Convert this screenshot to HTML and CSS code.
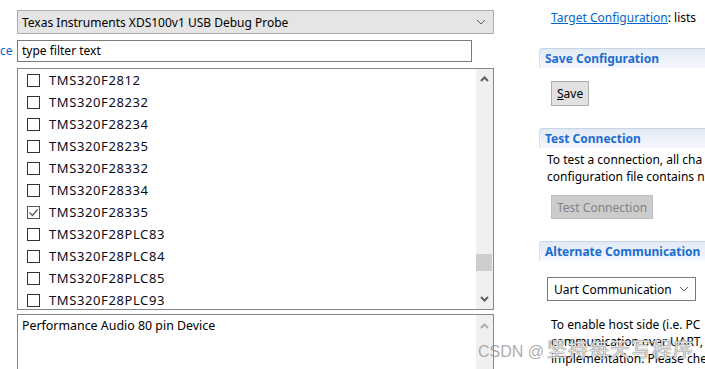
FILE: index.html
```html
<!DOCTYPE html>
<html lang="en">
<head>
    <meta charset="UTF-8">
    <title>Target Configuration</title>
    <link rel="stylesheet" href="styles.css">
</head>
<body>
    <div class="page">
        <div class="left">
            <div class="dropdown">
                <span>Texas Instruments XDS100v1 USB Debug Probe</span>
                <svg class="chev" width="10" height="6" viewBox="0 0 10 6"><path d="M1 1 L5 5 L9 1" fill="none" stroke="#606060" stroke-width="1"/></svg>
            </div>

            <div class="filter-row">
                <span class="cut-link">ce</span>
                <div class="filter">type filter text</div>
            </div>

            <div class="listbox">
                <ul class="items">
                    <li><span class="box"></span>TMS320F2812</li>
                    <li><span class="box"></span>TMS320F28232</li>
                    <li><span class="box"></span>TMS320F28234</li>
                    <li><span class="box"></span>TMS320F28235</li>
                    <li><span class="box"></span>TMS320F28332</li>
                    <li><span class="box"></span>TMS320F28334</li>
                    <li><span class="box checked"><svg width="11" height="11" viewBox="0 0 11 11"><path d="M1.5 5.5 L4.5 8.5 L9.5 2.5" fill="none" stroke="#555" stroke-width="1.2"/></svg></span>TMS320F28335</li>
                    <li><span class="box"></span>TMS320F28PLC83</li>
                    <li><span class="box"></span>TMS320F28PLC84</li>
                    <li><span class="box"></span>TMS320F28PLC85</li>
                    <li><span class="box"></span>TMS320F28PLC93</li>
                </ul>
                <div class="vscroll">
                    <svg class="arrow" width="9" height="6" viewBox="0 0 9 6"><path d="M1 5 L4.5 1.5 L8 5" fill="none" stroke="#606060" stroke-width="2"/></svg>
                    <div class="track"><div class="thumb"></div></div>
                    <svg class="arrow" width="9" height="6" viewBox="0 0 9 6"><path d="M1 1 L4.5 4.5 L8 1" fill="none" stroke="#606060" stroke-width="2"/></svg>
                </div>
            </div>

            <div class="descbox">
                <div class="desc-text">Performance Audio 80 pin Device</div>
                <div class="vscroll light">
                    <svg class="arrow" width="9" height="6" viewBox="0 0 9 6"><path d="M1 5 L4.5 1.5 L8 5" fill="none" stroke="#b0b0b0" stroke-width="2"/></svg>
                </div>
            </div>
        </div>

        <div class="right">
            <p class="intro"><a href="#">Target Configuration</a>: lists</p>

            <div class="section">
                <h2>Save Configuration</h2>
                <div class="section-body first">
                    <button class="btn"><u>S</u>ave</button>
                </div>
            </div>

            <div class="section">
                <h2>Test Connection</h2>
                <div class="section-body">
                    <p class="text">To test a connection, all cha<br>configuration file contains n</p>
                    <button class="btn disabled">Test Connection</button>
                </div>
            </div>

            <div class="section">
                <h2>Alternate Communication</h2>
                <div class="section-body">
                    <div class="combo">
                        <span>Uart Communication</span>
                        <svg width="10" height="6" viewBox="0 0 10 6"><path d="M1 1 L5 5 L9 1" fill="none" stroke="#606060" stroke-width="1"/></svg>
                    </div>
                    <p class="text indent">To enable host side (i.e. PC<br>communication over UART,<br>implementation. Please che</p>
                </div>
            </div>
        </div>
    </div>

    <div class="watermark">CSDN @<span class="cn">坚持每天写程序</span></div>
</body>
</html>
```

FILE: styles.css
```css
html, body {
    margin: 0;
    padding: 0;
    background: #fff;
    height: 369px;
    overflow: hidden;
}

body {
    font-family: 'Noto Sans', 'Open Sans', sans-serif;
    font-size: 12px;
    color: #000;
    position: relative;
}

.page {
    display: flex;
    align-items: flex-start;
}

/* left panel */
.left {
    width: 494px;
    padding-top: 10px;
    display: flex;
    flex-direction: column;
    flex-shrink: 0;
}

.dropdown {
    margin-left: 17px;
    height: 22px;
    border: 1px solid #adadad;
    background: #e5e5e5;
    display: flex;
    align-items: center;
    justify-content: space-between;
    padding: 0 7px 0 4px;
}

.filter-row {
    display: flex;
    margin-top: 6px;
}

.cut-link {
    width: 17px;
    box-sizing: border-box;
    padding-right: 5px;
    text-align: right;
    color: #0066cc;
    line-height: 22px;
    overflow: hidden;
}

.filter {
    height: 20px;
    line-height: 20px;
    border: 1px solid #7a7a7a;
    padding: 0 0 0 4px;
    width: 449px;
}

.listbox {
    margin: 6px 0 0 17px;
    height: 240px;
    border: 1px solid #828790;
    display: flex;
    overflow: hidden;
}

.items {
    list-style: none;
    margin: 0;
    padding: 0;
    flex: 1;
}

.items li {
    height: 22px;
    display: flex;
    align-items: center;
    padding-left: 9px;
    color: #0a0a1a;
    font-size: 13px;
    letter-spacing: 0.6px;
}

.box {
    width: 11px;
    height: 11px;
    border: 1px solid #333;
    margin-right: 9px;
    display: flex;
    align-items: center;
    justify-content: center;
    background: #fff;
}

.box.checked {
    border-color: #555;
}

.vscroll {
    width: 17px;
    background: #f0f0f0;
    display: flex;
    flex-direction: column;
    align-items: center;
}

.vscroll .arrow {
    margin: 7px 0;
}

.track {
    flex: 1;
    width: 100%;
    position: relative;
}

.thumb {
    position: absolute;
    left: 0;
    right: 1px;
    top: 165px;
    height: 17px;
    background: #cdcdcd;
}

.descbox {
    margin: 4px 0 0 17px;
    height: 60px;
    border: 1px solid #828790;
    border-bottom: none;
    display: flex;
}

.desc-text {
    flex: 1;
    padding: 3px 4px;
    line-height: 16px;
    font-size: 12.4px;
}

.vscroll.light .arrow {
    margin-top: 8px;
}

/* right panel */
.right {
    margin-left: 45px;
    width: 260px;
    flex-shrink: 0;
}

.intro {
    margin: 10px 0 0 12px;
    line-height: 16px;
    white-space: nowrap;
}

.intro a {
    color: #0066cc;
}

.section {
    margin-top: 22px;
}

.section h2 {
    margin: 0;
    font-size: 12px;
    font-weight: bold;
    color: #1a6dd0;
    height: 19px;
    line-height: 19px;
    padding-left: 5px;
    border-top: 1px solid #c7d5e7;
    border-left: 1px solid #d6e0ec;
    border-top-left-radius: 3px;
    background: linear-gradient(to bottom, #e2eaf5, #f6f8fc);
}

.section-body {
    padding: 3px 0 0 8px;
}

.section-body.first {
    padding-top: 13px;
    padding-left: 12px;
}

.text {
    margin: 0;
    line-height: 17px;
    white-space: nowrap;
}

.text.indent {
    margin: 15px 0 0 4px;
}

.btn {
    font-family: inherit;
    font-size: 12px;
    height: 25px;
    padding: 0 5px;
    background: #e1e1e1;
    border: 1px solid #adadad;
    color: #000;
}

.btn.disabled {
    margin: 10px 0 0 4px;
    height: 24px;
    background: #cccccc;
    border-color: #bfbfbf;
    color: #838383;
}

.combo {
    margin-top: 13px;
    height: 22px;
    border: 1px solid #7a7a7a;
    display: flex;
    align-items: center;
    justify-content: space-between;
    padding: 0 6px;
    width: 135px;
}

.watermark {
    position: absolute;
    left: 478px;
    top: 337px;
    font-family: 'Liberation Sans', sans-serif;
    font-size: 16px;
    line-height: 24px;
    color: rgba(150, 150, 150, 0.8);
    white-space: nowrap;
}

.watermark .cn {
    font-family: 'Noto Sans CJK SC', sans-serif;
    font-size: 20px;
    letter-spacing: 1px;
    margin-left: 3px;
    color: rgba(255, 255, 255, 0.8);
    text-shadow: 0 0 1px #666, 0 0 1px #666;
}
```
